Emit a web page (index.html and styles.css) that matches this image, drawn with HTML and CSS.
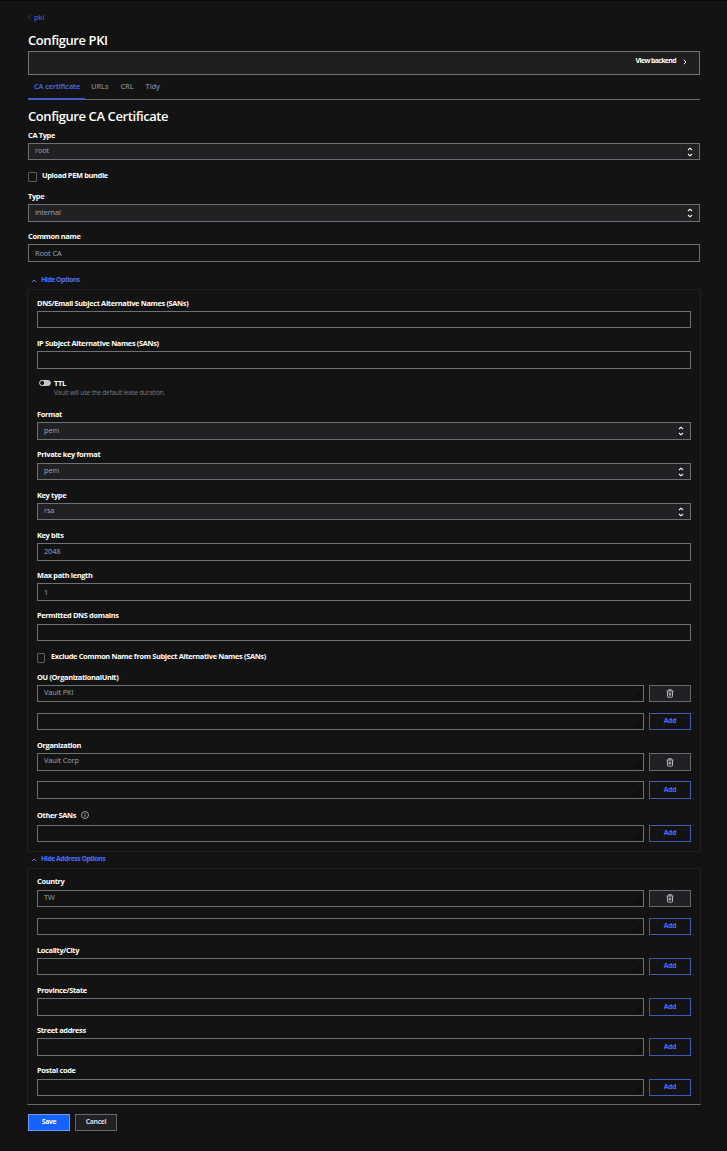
FILE: index.html
```html
<!DOCTYPE html>
<html lang="en">
<head>
<meta charset="utf-8">
<title>Configure PKI</title>
<link rel="stylesheet" href="styles.css">
</head>
<body>
<svg class="defs" width="0" height="0">
  <symbol id="updown" viewBox="0 0 6 10"><path d="M1 3 3 1.2 5 3M1 7 3 8.8 5 7" fill="none" stroke="currentColor" stroke-width="1.1"/></symbol>
  <symbol id="up" viewBox="0 0 6 4"><path d="M.8 3.2 3 1 5.2 3.2" fill="none" stroke="currentColor" stroke-width="1"/></symbol>
  <symbol id="trash" viewBox="0 0 8 9"><path d="M.5 2h7M2.8 1.8V.6h2.4v1.2M1.5 2.2v5.3q0 .7.7.7h3.6q.7 0 .7-.7V2.2M3.3 3.6v3M4.7 3.6v3" fill="none" stroke="currentColor" stroke-width=".9"/></symbol>
  <symbol id="grip" viewBox="0 0 9 9"><path d="M.5 8.5l8-8M4.5 8.5l4-4" fill="none" stroke="currentColor" stroke-width=".8"/></symbol>
</svg>
<main class="page">
  <nav class="crumb"><svg class="crumb-icon" viewBox="0 0 3 6"><path d="M2.6.6.6 3l2 2.4" fill="none" stroke="currentColor" stroke-width=".9"/></svg><a>pki</a></nav>
  <h1 class="title">Configure PKI</h1>
  <div class="toolbar"><a class="view">View backend</a><svg class="view-icon" viewBox="0 0 4 6"><path d="M.8.8 3 3 .8 5.2" fill="none" stroke="currentColor" stroke-width="1"/></svg></div>
  <div class="tabs"><a class="tab active">CA certificate</a><a class="tab">URLs</a><a class="tab">CRL</a><a class="tab">Tidy</a></div>

  <section class="basics">
    <h2 class="title">Configure CA Certificate</h2>
    <div class="field"><label>CA Type</label><div class="control select"><span>root</span><svg><use href="#updown"/></svg></div></div>
    <div class="check"><i class="box"></i><label>Upload PEM bundle</label></div>
    <div class="field"><label>Type</label><div class="control select tall"><span>internal</span><svg><use href="#updown"/></svg></div></div>
    <div class="field"><label>Common name</label><div class="control tall low"><span>Root CA</span></div></div>
  </section>

  <div class="disclosure first"><svg><use href="#up"/></svg><a>Hide Options</a></div>
  <section class="panel options">
    <div class="field"><label>DNS/Email Subject Alternative Names (SANs)</label><div class="control"></div></div>
    <div class="field"><label>IP Subject Alternative Names (SANs)</label><div class="control tall"></div></div>
    <div class="ttl"><i class="switch"></i><div><label>TTL</label><p class="help">Vault will use the default lease duration.</p></div></div>
    <div class="field"><label>Format</label><div class="control select tall"><span>pem</span><svg><use href="#updown"/></svg></div></div>
    <div class="field lift"><label>Private key format</label><div class="control select"><span>pem</span><svg><use href="#updown"/></svg></div></div>
    <div class="field"><label>Key type</label><div class="control select"><span>rsa</span><svg><use href="#updown"/></svg></div></div>
    <div class="field"><label>Key bits</label><div class="control tall"><span>2048</span></div></div>
    <div class="field"><label>Max path length</label><div class="control tall low"><span>1</span></div></div>
    <div class="field lift"><label>Permitted DNS domains</label><div class="control"></div></div>
    <div class="check"><i class="box narrow"></i><label>Exclude Common Name from Subject Alternative Names (SANs)</label></div>
    <div class="field"><label>OU (OrganizationalUnit)</label><div class="row"><div class="control area"><span>Vault PKI</span><svg><use href="#grip"/></svg></div><button class="btn"><svg class="trash"><use href="#trash"/></svg></button></div></div>
    <div class="field"><div class="row"><div class="control area"><svg><use href="#grip"/></svg></div><button class="btn add">Add</button></div></div>
    <div class="field"><label>Organization</label><div class="row tall"><div class="control area"><span>Vault Corp</span><svg><use href="#grip"/></svg></div><button class="btn"><svg class="trash"><use href="#trash"/></svg></button></div></div>
    <div class="field"><div class="row tall"><div class="control area"><svg><use href="#grip"/></svg></div><button class="btn add">Add</button></div></div>
    <div class="field lift-more"><label>Other SANs<svg class="info" viewBox="0 0 8 8"><circle cx="4" cy="4" r="3.5" fill="none" stroke="currentColor" stroke-width=".8"/><path d="M4 3.5V6M4 2v.9" stroke="currentColor" stroke-width=".9"/></svg></label><div class="row"><div class="control area"><svg><use href="#grip"/></svg></div><button class="btn add">Add</button></div></div>
  </section>

  <div class="disclosure"><svg><use href="#up"/></svg><a>Hide Address Options</a></div>
  <section class="panel address">
    <div class="field lift"><label>Country</label><div class="row"><div class="control area"><span>TW</span><svg><use href="#grip"/></svg></div><button class="btn"><svg class="trash"><use href="#trash"/></svg></button></div></div>
    <div class="field"><div class="row"><div class="control area"><svg><use href="#grip"/></svg></div><button class="btn add">Add</button></div></div>
    <div class="field"><label>Locality/City</label><div class="row"><div class="control area"><svg><use href="#grip"/></svg></div><button class="btn add">Add</button></div></div>
    <div class="field"><label>Province/State</label><div class="row tall"><div class="control area"><svg><use href="#grip"/></svg></div><button class="btn add">Add</button></div></div>
    <div class="field"><label>Street address</label><div class="row tall"><div class="control area"><svg><use href="#grip"/></svg></div><button class="btn add">Add</button></div></div>
    <div class="field lift"><label>Postal code</label><div class="row"><div class="control area"><svg><use href="#grip"/></svg></div><button class="btn add">Add</button></div></div>
  </section>

  <div class="actions"><button class="btn save">Save</button><button class="btn">Cancel</button></div>
</main>
</body>
</html>
```
FILE: styles.css
```css
* { box-sizing: border-box; margin: 0; padding: 0; }
body {
  background: #131313;
  color: #fff;
  font: 600 7.4px/12px "Open Sans", "Noto Sans", sans-serif;
  border-top: 1px solid #080808;
  min-height: 1151px;
}
.defs { display: block; }
.page { padding: 0 27px 0 28px; }
a { color: #4a6ffa; white-space: nowrap; }
label { white-space: nowrap; letter-spacing: -.17px; font-weight: 700; letter-spacing: -.33px; }
svg { flex: none; }

.crumb { display: flex; align-items: center; gap: 3px; height: 21px; padding-top: 11px; font-weight: 400; font-size: 7.8px; letter-spacing: -.2px; }
.crumb-icon { width: 3px; height: 6px; color: #3a4680; }
.title { font-size: 13px; line-height: 18px; font-weight: 600; letter-spacing: -.41px; }
h1.title { height: 29px; padding-top: 9px; }
h2.title { padding-top: 7px; }

.toolbar { display: flex; justify-content: flex-end; gap: 7px; height: 24px; padding: 3px 12px 0 0; background: #1f1f1f; border: 1px solid #6f747b; }
.view { color: #fff; font-size: 6.9px; font-weight: 700; letter-spacing: -.6px; }
.view-icon { width: 4px; height: 6px; margin-top: 4px; }

.tabs { display: flex; height: 25px; border-bottom: 1px solid #66696f; }
.tab { height: 25px; padding: 5px 6px 0; color: #7f8289; letter-spacing: -.1px; }
.tab.active { color: #4a6ffa; width: 57px; border-bottom: 2px solid #3f5fc4; }

.basics { display: grid; grid-template-rows: 27px 33px 30px 32px 40px; }
.panel { display: grid; margin: 0 -1px; padding: 0 9px; border: 1px solid #202022; }
.options { grid-template-rows: 38px 41px 35px 36px 40px 40px 41px 40px 40px 28px 33px 28px 41px 28px 43px; padding-bottom: 9px; }
.address { grid-template-rows: 38px 28px 40px 41px 40px 40px; padding-bottom: 8px; border-bottom-color: #66696f; }

.field { display: flex; flex-direction: column; justify-content: flex-end; min-height: 0; }
.field > label { display: flex; align-items: center; height: 12px; margin-bottom: 2px; }
.lift > label { margin-bottom: 3px; }
.lift-more > label { margin-bottom: 4px; }
.control { display: flex; justify-content: space-between; height: 17px; padding: 0 6px; border: 1px solid #6b7076; color: #9aa3bb; font-weight: 400; line-height: 13px; letter-spacing: -.12px; }
.select { background: #212124; }
.select svg { width: 6px; height: 10px; margin-top: 3px; color: #fff; }
.tall { height: 18px; }
.control.tall { line-height: 15px; }
.control.low { line-height: 16px; }
.row { display: flex; gap: 5px; height: 17px; }
.row.tall { height: 18px; }
.area { flex: 1; height: auto; padding-right: 1px; }
.area svg { width: 9px; height: 9px; margin: auto 0 1px auto; color: #000; }

.btn { display: flex; justify-content: center; width: 42px; height: 100%; border: 1px solid #66696f; background: #212124; color: #d5d8df; font: 700 6.8px/14px "Open Sans", "Noto Sans", sans-serif; letter-spacing: -.35px; }
.add { border-color: #405bb5; background: #131313; color: #4a6ffa; letter-spacing: -.2px; }
.tall .add { line-height: 16px; }
.trash { width: 8px; height: 9px; margin-top: 3px; color: #c4c7ce; }
.tall .trash { margin-top: 4px; }
.save { background: #1563ff; border-color: #7496f4; color: #fff; }
.info { width: 8px; height: 8px; margin-left: 5px; color: #b4b7bd; }

.check { display: flex; gap: 6px; padding-top: 9px; }
.box { width: 9px; height: 10px; margin-top: 3px; border: 1px solid #5b5d62; border-radius: 1px; }
.basics .box { margin-right: -1px; }
.narrow { width: 8px; }
.ttl { display: flex; gap: 3px; padding: 8px 0 0 2px; }
.ttl label { display: block; height: 10px; }
.switch { width: 12px; height: 6px; margin-top: 3px; border-radius: 3px; border: 1px solid #bfc4cc; background: radial-gradient(circle at 2px 2px, #131313 1.8px, #bfc4cc 2.3px); }
.help { color: #777c86; font-weight: 400; font-size: 6.4px; line-height: 11px; letter-spacing: -.19px; }

.disclosure { display: flex; gap: 5px; height: 16px; padding: 1px 0 0 3px; font-size: 6.9px; font-weight: 700; letter-spacing: -.5px; }
.disclosure a { margin-left: -1px; }
.disclosure svg { width: 6px; height: 4px; margin-top: 5px; color: #5f7cf5; }
.disclosure.first { height: 27px; padding-top: 12px; }

.actions { display: flex; gap: 5px; padding-top: 9px; height: 26px; }
```
